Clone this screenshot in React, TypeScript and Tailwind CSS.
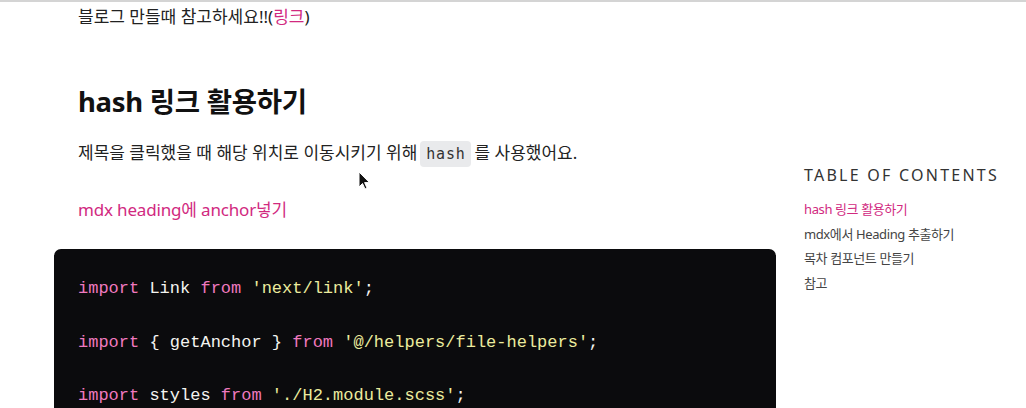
import React from 'react';

const sans = { fontFamily: '"Noto Sans", "Noto Sans CJK KR", sans-serif' };
const mono = { fontFamily: '"Liberation Mono", "DejaVu Sans Mono", monospace' };

const Kw = ({ children }: { children: React.ReactNode }) => (
  <span className="text-[#ef79bf]">{children}</span>
);
const Str = ({ children }: { children: React.ReactNode }) => (
  <span className="text-[#ecec9e]">{children}</span>
);

function Cursor() {
  return (
    <svg
      className="absolute left-[358px] top-[169px]"
      width="13"
      height="20"
      viewBox="0 0 13 20"
    >
      <path
        d="M1 1 L1 16 L4.5 12.5 L7 18 L9 17 L6.6 11.6 L11.5 11.6 Z"
        fill="#111"
        stroke="#fff"
        strokeWidth="1"
        strokeLinejoin="round"
      />
    </svg>
  );
}

export default function App() {
  const toc = [
    { label: 'hash 링크 활용하기', active: true },
    { label: 'mdx에서 Heading 추출하기', active: false },
    { label: '목차 컴포넌트 만들기', active: false },
    { label: '참고', active: false },
  ];

  return (
    <div className="relative h-[408px] w-[1026px] overflow-hidden bg-white border-t-2 border-[#d4d4d4]" style={sans}>
      <div className="flex pl-[78px]">
        <main className="w-[674px] shrink-0">
          <p className="text-[17px] leading-[28px] text-[#222] mt-[1px]">
            블로그 만들때 참고하세요!!(<span className="text-[#d1297f]">링크</span>)
          </p>

          <h2 className="mt-[53px] text-[27.5px] leading-[36px] font-bold text-[#111] tracking-[-0.01em]">
            hash 링크 활용하기
          </h2>

          <p className="mt-[19px] text-[17px] leading-[28px] text-[#222]">
            제목을 클릭했을 때 해당 위치로 이동시키기 위해
            <code
              className="mx-[3px] rounded-[4px] bg-[#e9eaec] px-[6px] py-[4px] text-[15px] text-[#333] tracking-[0.05em]"
              style={{ fontFamily: '"DejaVu Sans Mono", monospace' }}
            >
              hash
            </code>
            를 사용했어요.
          </p>

          <a className="mt-[27px] block text-[17px] leading-[30px] text-[#d1297f] tracking-[-0.01em]">
            mdx heading에 anchor넣기
          </a>

          <div className="-mx-6 mt-[24px] rounded-[7px] bg-[#0b0b0d] px-6 pt-[27px] pb-6">
            <pre className="text-[17px] leading-[26.75px] text-[#f4f4f0]" style={mono}>
              <Kw>import</Kw> Link <Kw>from</Kw> <Str>'next/link'</Str>;{'\n'}
              {'\n'}
              <Kw>import</Kw> {'{'} getAnchor {'}'} <Kw>from</Kw> <Str>'@/helpers/file-helpers'</Str>;{'\n'}
              {'\n'}
              <Kw>import</Kw> styles <Kw>from</Kw> <Str>'./H2.module.scss'</Str>;{'\n'}
              {'\n'}
              <Kw>export</Kw> <Kw>default</Kw> <Kw>function</Kw> H2() {'{'}
            </pre>
          </div>
        </main>

        <aside className="ml-[52px] mt-[160px] w-[200px]">
          <h3 className="text-[16px] leading-[26px] tracking-[0.14em] text-[#333]">
            TABLE OF CONTENTS
          </h3>
          <ul className="mt-[9px] flex flex-col">
            {toc.map((item) => (
              <li
                key={item.label}
                className={`text-[13px] leading-[24.7px] tracking-[-0.03em] ${
                  item.active ? 'text-[#d1297f]' : 'text-[#444]'
                }`}
              >
                {item.label}
              </li>
            ))}
          </ul>
        </aside>
      </div>
      <Cursor />
    </div>
  );
}
